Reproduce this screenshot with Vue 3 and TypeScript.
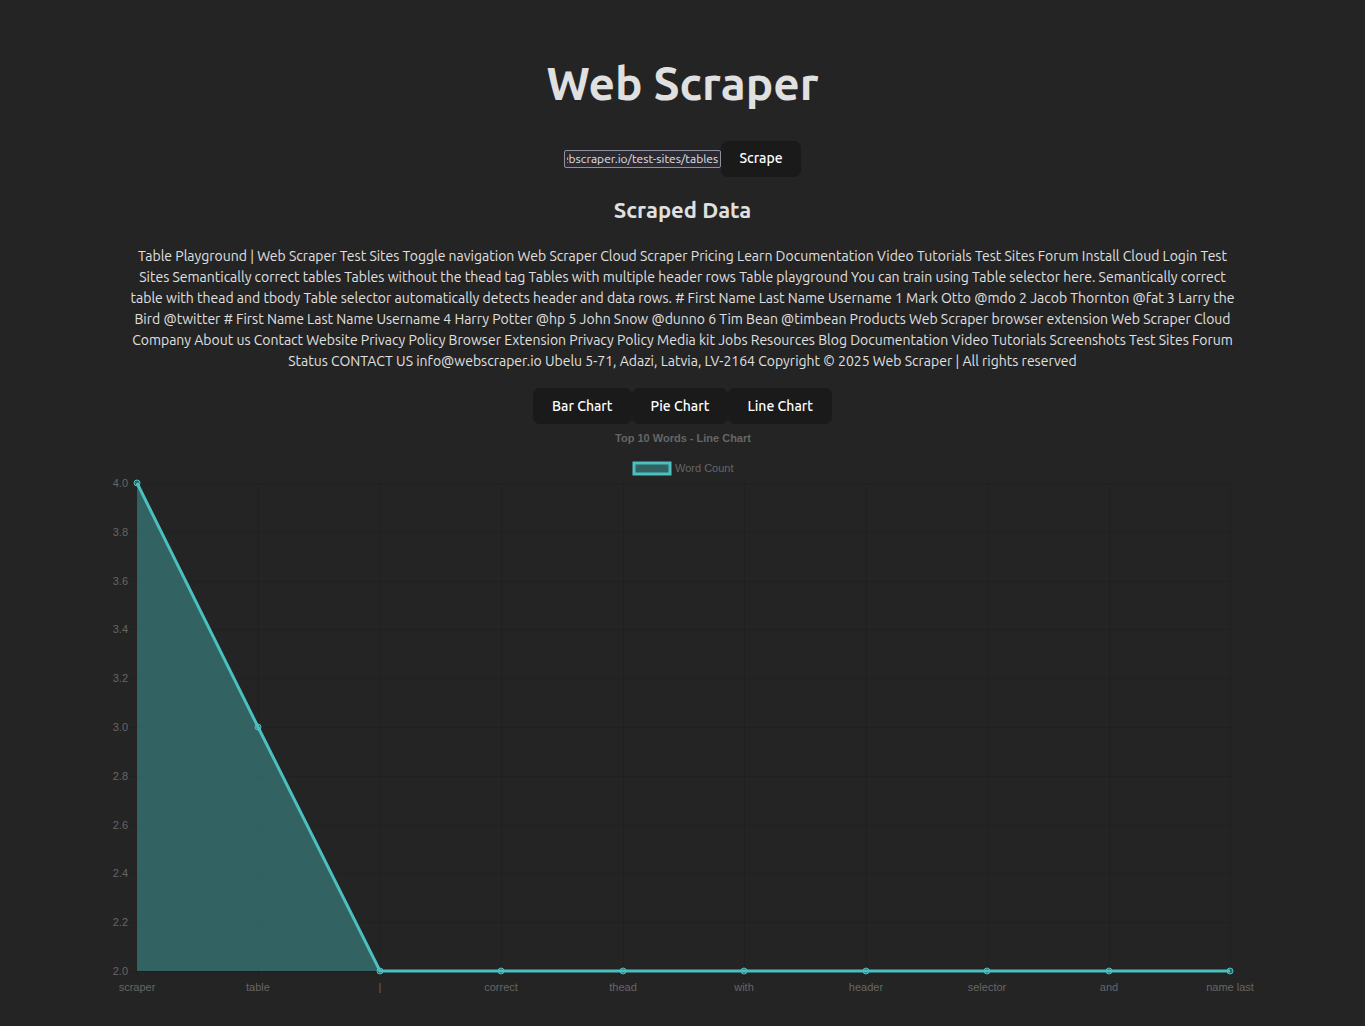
<script setup lang="ts">
import { nextTick, onMounted, ref } from 'vue'

type ChartKind = 'Bar' | 'Pie' | 'Line'

const url = ref('https://webscraper.io/test-sites/tables')
const urlInput = ref<HTMLInputElement | null>(null)
const kinds: ChartKind[] = ['Bar', 'Pie', 'Line']
const kind = ref<ChartKind>('Line')

const scraped: string[] = [
  'Table Playground | Web Scraper Test Sites Toggle navigation Web Scraper Cloud Scraper Pricing Learn Documentation Video Tutorials Test Sites Forum Install Cloud Login Test',
  'Sites Semantically correct tables Tables without the thead tag Tables with multiple header rows Table playground You can train using Table selector here. Semantically correct',
  'table with thead and tbody Table selector automatically detects header and data rows. # First Name Last Name Username 1 Mark Otto @mdo 2 Jacob Thornton @fat 3 Larry the',
  'Bird @twitter # First Name Last Name Username 4 Harry Potter @hp 5 John Snow @dunno 6 Tim Bean @timbean Products Web Scraper browser extension Web Scraper Cloud',
  'Company About us Contact Website Privacy Policy Browser Extension Privacy Policy Media kit Jobs Resources Blog Documentation Video Tutorials Screenshots Test Sites Forum',
  'Status CONTACT US info@webscraper.io Ubelu 5-71, Adazi, Latvia, LV-2164 Copyright © 2025 Web Scraper | All rights reserved',
]

const words = [
  { label: 'scraper', count: 4 },
  { label: 'table', count: 3 },
  { label: '|', count: 2 },
  { label: 'correct', count: 2 },
  { label: 'thead', count: 2 },
  { label: 'with', count: 2 },
  { label: 'header', count: 2 },
  { label: 'selector', count: 2 },
  { label: 'and', count: 2 },
  { label: 'name last', count: 2 },
]

const area = { left: 30, right: 1123, top: 59, bottom: 547 }
const min = 2
const max = 4

const xAt = (i: number) =>
  Math.round(area.left + ((area.right - area.left) * i) / (words.length - 1))
const yAt = (v: number) =>
  Math.round(area.bottom - ((area.bottom - area.top) * (v - min)) / (max - min))

const points = words.map((w, i) => ({ label: w.label, x: xAt(i), y: yAt(w.count) }))
const ticks = Array.from({ length: 11 }, (_, i) => {
  const value = max - i * 0.2
  return { text: value.toFixed(1), y: yAt(value) }
})
const line = points.map((p) => `${p.x},${p.y}`).join(' ')
const fill = `${area.left},${area.bottom} ${line} ${area.right},${area.bottom}`

onMounted(async () => {
  await nextTick()
  if (urlInput.value) urlInput.value.scrollLeft = urlInput.value.scrollWidth
})
</script>

<template>
  <main class="app">
    <h1>Web Scraper</h1>
    <form class="row" @submit.prevent>
      <input ref="urlInput" v-model="url" type="text" aria-label="URL to scrape" />
      <button type="submit">Scrape</button>
    </form>
    <h2>Scraped Data</h2>
    <p class="data">
      <template v-for="(text, i) in scraped" :key="i">{{ text }}<br /></template>
    </p>
    <div class="row charts">
      <button v-for="k in kinds" :key="k" type="button" @click="kind = k">{{ k }} Chart</button>
    </div>
    <svg class="chart" viewBox="0 0 1152 576" role="img" aria-label="Top 10 words">
      <text class="title" x="576" y="18">Top 10 Words - {{ kind }} Chart</text>
      <rect class="swatch" x="527" y="39" width="36" height="11" />
      <text x="568" y="48">Word Count</text>

      <g class="grid">
        <line v-for="t in ticks" :key="t.text" :x1="area.left - 8" :x2="area.right" :y1="t.y" :y2="t.y" />
        <line v-for="p in points" :key="p.label" :x1="p.x" :x2="p.x" :y1="area.top" :y2="area.bottom + 8" />
      </g>

      <polygon class="fill" :points="fill" />
      <polyline class="line" :points="line" />
      <circle v-for="p in points" :key="p.label" class="dot" :cx="p.x" :cy="p.y" r="3" />

      <text v-for="t in ticks" :key="t.text" class="end" x="21" :y="t.y + 4">{{ t.text }}</text>
      <text v-for="p in points" :key="p.label" class="mid" :x="p.x" y="567">{{ p.label }}</text>
    </svg>
  </main>
</template>

<style>
body {
  background: #242424;
}
</style>

<style scoped>
.app {
  box-sizing: border-box;
  max-width: 1152px;
  margin: 0 auto;
  padding: 57px 0 24px;
  color: #e0e0e0;
  font-family: Ubuntu, "Noto Sans", sans-serif;
  font-size: 14px;
  text-align: center;
}

h1 {
  margin: 0 0 31px;
  font-size: 46px;
  line-height: 53px;
  font-weight: 600;
}

h2 {
  margin: 21px 0 24px;
  font-size: 22px;
  line-height: 24px;
  font-weight: 600;
}

.row {
  display: flex;
  justify-content: center;
  align-items: center;
}

input {
  box-sizing: border-box;
  width: 157px;
  height: 18px;
  padding: 0 2px 1px;
  border: 1px solid #8f8f9d;
  border-radius: 2px;
  background: #2b2a33;
  color: #e0e0e0;
  font: inherit;
  font-size: 12px;
}

button {
  height: 36px;
  padding: 0 18px 2px;
  border: 0;
  border-radius: 7px;
  background: #1a1a1a;
  color: #fff;
  font: inherit;
  font-weight: 500;
  cursor: pointer;
}

.charts button {
  padding: 0 19px;
}

.data {
  margin: 0 0 16px;
  line-height: 21px;
  white-space: nowrap;
}

.chart {
  display: block;
  width: 100%;
  font-family: "Liberation Sans", Arial, sans-serif;
  font-size: 11px;
}

.chart text {
  fill: #666;
}

.chart .title {
  font-weight: 700;
  text-anchor: middle;
}

.chart .end {
  text-anchor: end;
}

.chart .mid {
  text-anchor: middle;
}

.grid line {
  stroke: rgba(0, 0, 0, 0.1);
  stroke-width: 1;
  shape-rendering: crispEdges;
}

.fill {
  fill: rgba(75, 192, 192, 0.4);
}

.line {
  fill: none;
  stroke: #4bc0c0;
  stroke-width: 3;
}

.swatch {
  fill: rgba(75, 192, 192, 0.4);
  stroke: #4bc0c0;
  stroke-width: 3;
}

.dot {
  fill: rgba(75, 192, 192, 0.4);
  stroke: #4bc0c0;
  stroke-width: 1;
}
</style>
